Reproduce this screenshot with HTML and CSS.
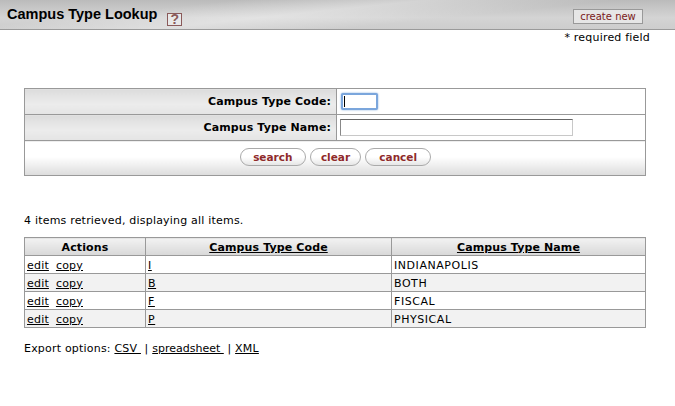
FILE: index.html
```html
<!DOCTYPE html>
<html lang="en">
<head>
    <meta charset="UTF-8">
    <title>Campus Type Lookup</title>
    <link rel="stylesheet" href="styles.css">
</head>
<body>
    <div class="header">
        <h1>Campus Type Lookup</h1>
        <span class="help">?</span>
        <a class="create-new" href="#">create new</a>
    </div>
    <div class="required">* required field</div>

    <table class="search">
        <tr>
            <th class="label">Campus Type Code:</th>
            <td class="field"><input class="input-code" type="text"></td>
        </tr>
        <tr>
            <th class="label">Campus Type Name:</th>
            <td class="field"><input class="input-name" type="text"></td>
        </tr>
        <tr>
            <td class="buttons" colspan="2">
                <button class="btn btn-search">search</button>
                <button class="btn btn-clear">clear</button>
                <button class="btn btn-cancel">cancel</button>
            </td>
        </tr>
    </table>

    <p class="count">4 items retrieved, displaying all items.</p>

    <table class="results">
        <tr>
            <th class="col-actions">Actions</th>
            <th class="col-code"><a href="#">Campus Type Code</a></th>
            <th><a href="#">Campus Type Name</a></th>
        </tr>
        <tr>
            <td><a href="#">edit</a><a class="copy" href="#">copy</a></td>
            <td class="caps"><a href="#">I</a></td>
            <td class="caps">INDIANAPOLIS</td>
        </tr>
        <tr class="alt">
            <td><a href="#">edit</a><a class="copy" href="#">copy</a></td>
            <td class="caps"><a href="#">B</a></td>
            <td class="caps">BOTH</td>
        </tr>
        <tr>
            <td><a href="#">edit</a><a class="copy" href="#">copy</a></td>
            <td class="caps"><a href="#">F</a></td>
            <td class="caps">FISCAL</td>
        </tr>
        <tr class="alt">
            <td><a href="#">edit</a><a class="copy" href="#">copy</a></td>
            <td class="caps"><a href="#">P</a></td>
            <td class="caps">PHYSICAL</td>
        </tr>
    </table>

    <p class="export">Export options: <a href="#">CSV&nbsp;</a> | <a class="sheet" href="#">spreadsheet&nbsp;</a> | <a href="#">XML</a></p>
</body>
</html>
```

FILE: styles.css
```css
body {
    margin: 0;
    background-color: #fff;
    color: #000;
    font-family: "DejaVu Sans", Verdana, sans-serif;
    font-size: 11px;
    letter-spacing: 0.2px;
}
a {
    color: #000;
}

/* header bar */
.header {
    display: flex;
    align-items: flex-start;
    height: 29px;
    border-bottom: 1px solid #9a9a9a;
    background:
        linear-gradient(174deg, transparent 25%, rgba(255, 255, 255, 0.35) 45%, transparent 65%),
        linear-gradient(#bbb, #d4d4d4 60%, #cdcdcd);
}
.header h1 {
    margin: 5px 0 0 7px;
    font-family: "Liberation Sans", Arial, sans-serif;
    font-size: 14.5px;
    font-weight: bold;
    letter-spacing: 0;
    line-height: 18px;
}
.help {
    box-sizing: border-box;
    width: 15px;
    height: 13px;
    margin: 13px 0 0 10px;
    border: 1px solid #8a5a5a;
    background-color: #e8e8e8;
    color: #8a5a5a;
    font-family: "Liberation Sans", Arial, sans-serif;
    font-size: 14px;
    font-weight: bold;
    letter-spacing: 0;
    line-height: 11px;
    text-align: center;
}
.create-new {
    box-sizing: border-box;
    width: 70px;
    height: 15px;
    margin: 9px 32px 0 auto;
    border: 1px solid #999;
    background-color: #e6e6e6;
    color: #7a2020;
    font-size: 10px;
    letter-spacing: 0;
    line-height: 14px;
    text-align: center;
    text-decoration: none;
}
.required {
    margin: 1px 25px 0 0;
    line-height: 14px;
    text-align: right;
}

/* search form */
.search {
    width: 622px;
    margin: 43px 0 0 24px;
    border-collapse: collapse;
    border: 1px solid #999;
}
.search th, .search td {
    padding: 0;
    border: 1px solid #999;
}
.label {
    width: 306px;
    height: 25px;
    padding-right: 5px !important;
    background: linear-gradient(#dcdcdc, #ececec 60%, #e4e4e4);
    text-align: right;
    font-size: 11px;
    letter-spacing: 0.12px;
}
.field {
    padding-left: 3px !important;
}
.field input {
    display: block;
    box-sizing: border-box;
    height: 17px;
    padding: 0;
    outline: none;
}
.input-code {
    width: 37px;
    margin-left: 1px;
    border: 2px solid #7ba6dc;
    border-radius: 2px;
    /* text caret of the focused field */
    background: #fff linear-gradient(#000, #000) no-repeat 1px 1px / 1px 11px;
    box-shadow: 0 0 2px #7ba6dc;
}
.input-name {
    width: 233px;
    border: 1px solid #c8c8c8;
    border-top-color: #666;
    border-left-color: #888;
    background-color: #fff;
}
.buttons {
    height: 32px;
    padding: 0 0 2px 1px !important;
    background: linear-gradient(#fff, #fff 45%, #dcdcdc);
    text-align: center;
    font-size: 0;
}
.btn {
    height: 18px;
    margin: 0 2px;
    padding: 0;
    border: 1px solid #aaa;
    border-radius: 9px;
    background: linear-gradient(#fff, #fff 50%, #e6e6e6);
    color: #8f2a2a;
    font-family: "DejaVu Sans", Verdana, sans-serif;
    font-size: 10.5px;
    font-weight: bold;
}
.btn-search { width: 66px; }
.btn-clear { width: 51px; }
.btn-cancel { width: 66px; }

.count {
    margin: 38px 0 0 24px;
    line-height: 14px;
}

/* results */
.results {
    width: 622px;
    margin: 9px 0 0 24px;
    border-collapse: collapse;
    table-layout: fixed;
}
.results th, .results td {
    height: 16px;
    padding: 1px 2px 0;
    border: 1px solid #999;
    line-height: 13px;
}
.results th {
    background: linear-gradient(#f2f2f2, #d8d8d8);
    text-align: center;
    letter-spacing: 0.12px;
}
.col-actions { width: 116px; }
.col-code { width: 241px; }
.results .caps {
    letter-spacing: 0.55px;
}
.alt {
    background-color: #f2f2f2;
}
.copy {
    margin-left: 7px;
}

.export {
    margin: 14px 0 0 24px;
    line-height: 14px;
}
.sheet {
    letter-spacing: 0;
}
```
